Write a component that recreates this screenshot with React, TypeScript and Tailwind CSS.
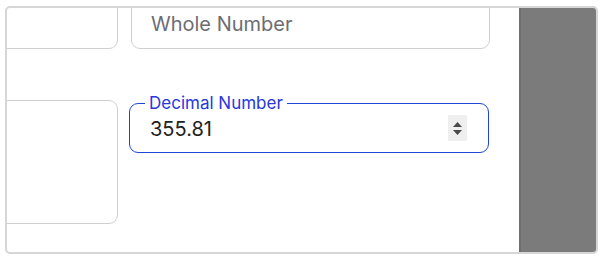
// ── Tiny spinner (up/down) ───────────────────────────────────
function Spinner() {
  return (
    <div className="flex h-[26px] w-[19px] flex-col items-center justify-center gap-[3px] bg-[#efefef]">
      <svg width="9" height="5" viewBox="0 0 9 5">
        <path d="M0 5 L4.5 0 L9 5 Z" fill="#4a4a4a" />
      </svg>
      <svg width="9" height="5" viewBox="0 0 9 5">
        <path d="M0 0 L9 0 L4.5 5 Z" fill="#4a4a4a" />
      </svg>
    </div>
  )
}

export default function App() {
  return (
    <div
      className="h-[260px] w-[604px] bg-white pb-[6px] pl-[5px] pr-[6px] pt-[6px]"
      style={{ fontFamily: 'Inter, "Noto Sans", sans-serif' }}
    >
      <div className="flex h-full overflow-hidden rounded-[5px] border-2 border-[#d6d6d6] bg-white">
        {/* ── form area (scrolled) ─────────────────────────── */}
        <div className="relative flex-1 overflow-hidden">
          <div className="-ml-[29px] -mt-[9px] grid grid-cols-[140px_359px] gap-x-[13px] gap-y-[51px]">
            <div className="h-[50px] rounded-[9px] border border-[#cfcfcf]" />
            <div className="flex h-[50px] items-center rounded-[9px] border border-[#cfcfcf] px-[19px]">
              <span className="text-[20px] text-[#6d6d72]">Whole Number</span>
            </div>

            <div className="h-[124px] rounded-[9px] border border-[#cfcfcf]" />
            <div className="-ml-[2px] pt-[3px]">
              <div className="relative flex h-[50px] w-[360px] items-center rounded-[9px] border border-[#1f46d8] pl-[20px] pr-[21px]">
                <span className="absolute -top-[11px] left-[15px] bg-white px-[4px] text-[17px] leading-[20px] text-[#2637e0]">
                  Decimal Number
                </span>
                <span className="flex-1 pt-[1px] text-[20px] leading-[28px] text-[#222]">355.81</span>
                <Spinner />
              </div>
            </div>
          </div>
        </div>

        {/* ── side panel ───────────────────────────────────── */}
        <div className="w-[77px] border-l-2 border-[#6e6e6e] bg-[#7b7b7b]" />
      </div>
    </div>
  )
}
